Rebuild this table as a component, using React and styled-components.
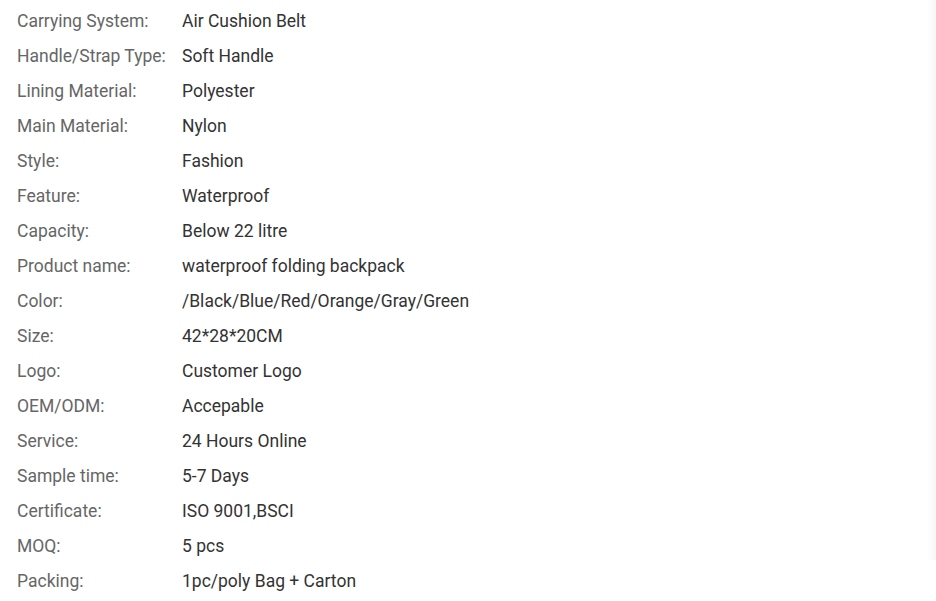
import React from "react";
import styled, { createGlobalStyle } from "styled-components";

const Global = createGlobalStyle`
  html, body { margin: 0; padding: 0; background: #fff; }
  body {
    font-family: Roboto, "Liberation Sans", Arial, sans-serif;
    background: linear-gradient(to right, #fff 0, #fff 927px, #f6f6f6 936px) no-repeat;
    background-size: 100% 560px;
    min-height: 601px;
  }
`;

const Table = styled.dl`
  margin: 0;
  padding: 4px 0 0 17px;
  display: grid;
  grid-template-columns: 165px 1fr;
  grid-auto-rows: 35px;
  align-items: center;
  font-size: 17.5px;
  line-height: 35px;
`;

const Label = styled.dt`
  margin: 0;
  color: #666;
  white-space: nowrap;
`;

const Value = styled.dd`
  margin: 0;
  color: #333;
  white-space: nowrap;
`;

const rows = [
  ["Carrying System:", "Air Cushion Belt"],
  ["Handle/Strap Type:", "Soft Handle"],
  ["Lining Material:", "Polyester"],
  ["Main Material:", "Nylon"],
  ["Style:", "Fashion"],
  ["Feature:", "Waterproof"],
  ["Capacity:", "Below 22 litre"],
  ["Product name:", "waterproof folding backpack"],
  ["Color:", "/Black/Blue/Red/Orange/Gray/Green"],
  ["Size:", "42*28*20CM"],
  ["Logo:", "Customer Logo"],
  ["OEM/ODM:", "Accepable"],
  ["Service:", "24 Hours Online"],
  ["Sample time:", "5-7 Days"],
  ["Certificate:", "ISO 9001,BSCI"],
  ["MOQ:", "5 pcs"],
  ["Packing:", "1pc/poly Bag + Carton"],
];

export default function App() {
  return (
    <>
      <Global />
      <Table>
        {rows.map(([k, v]) => (
          <React.Fragment key={k}>
            <Label>{k}</Label>
            <Value>{v}</Value>
          </React.Fragment>
        ))}
      </Table>
    </>
  );
}
